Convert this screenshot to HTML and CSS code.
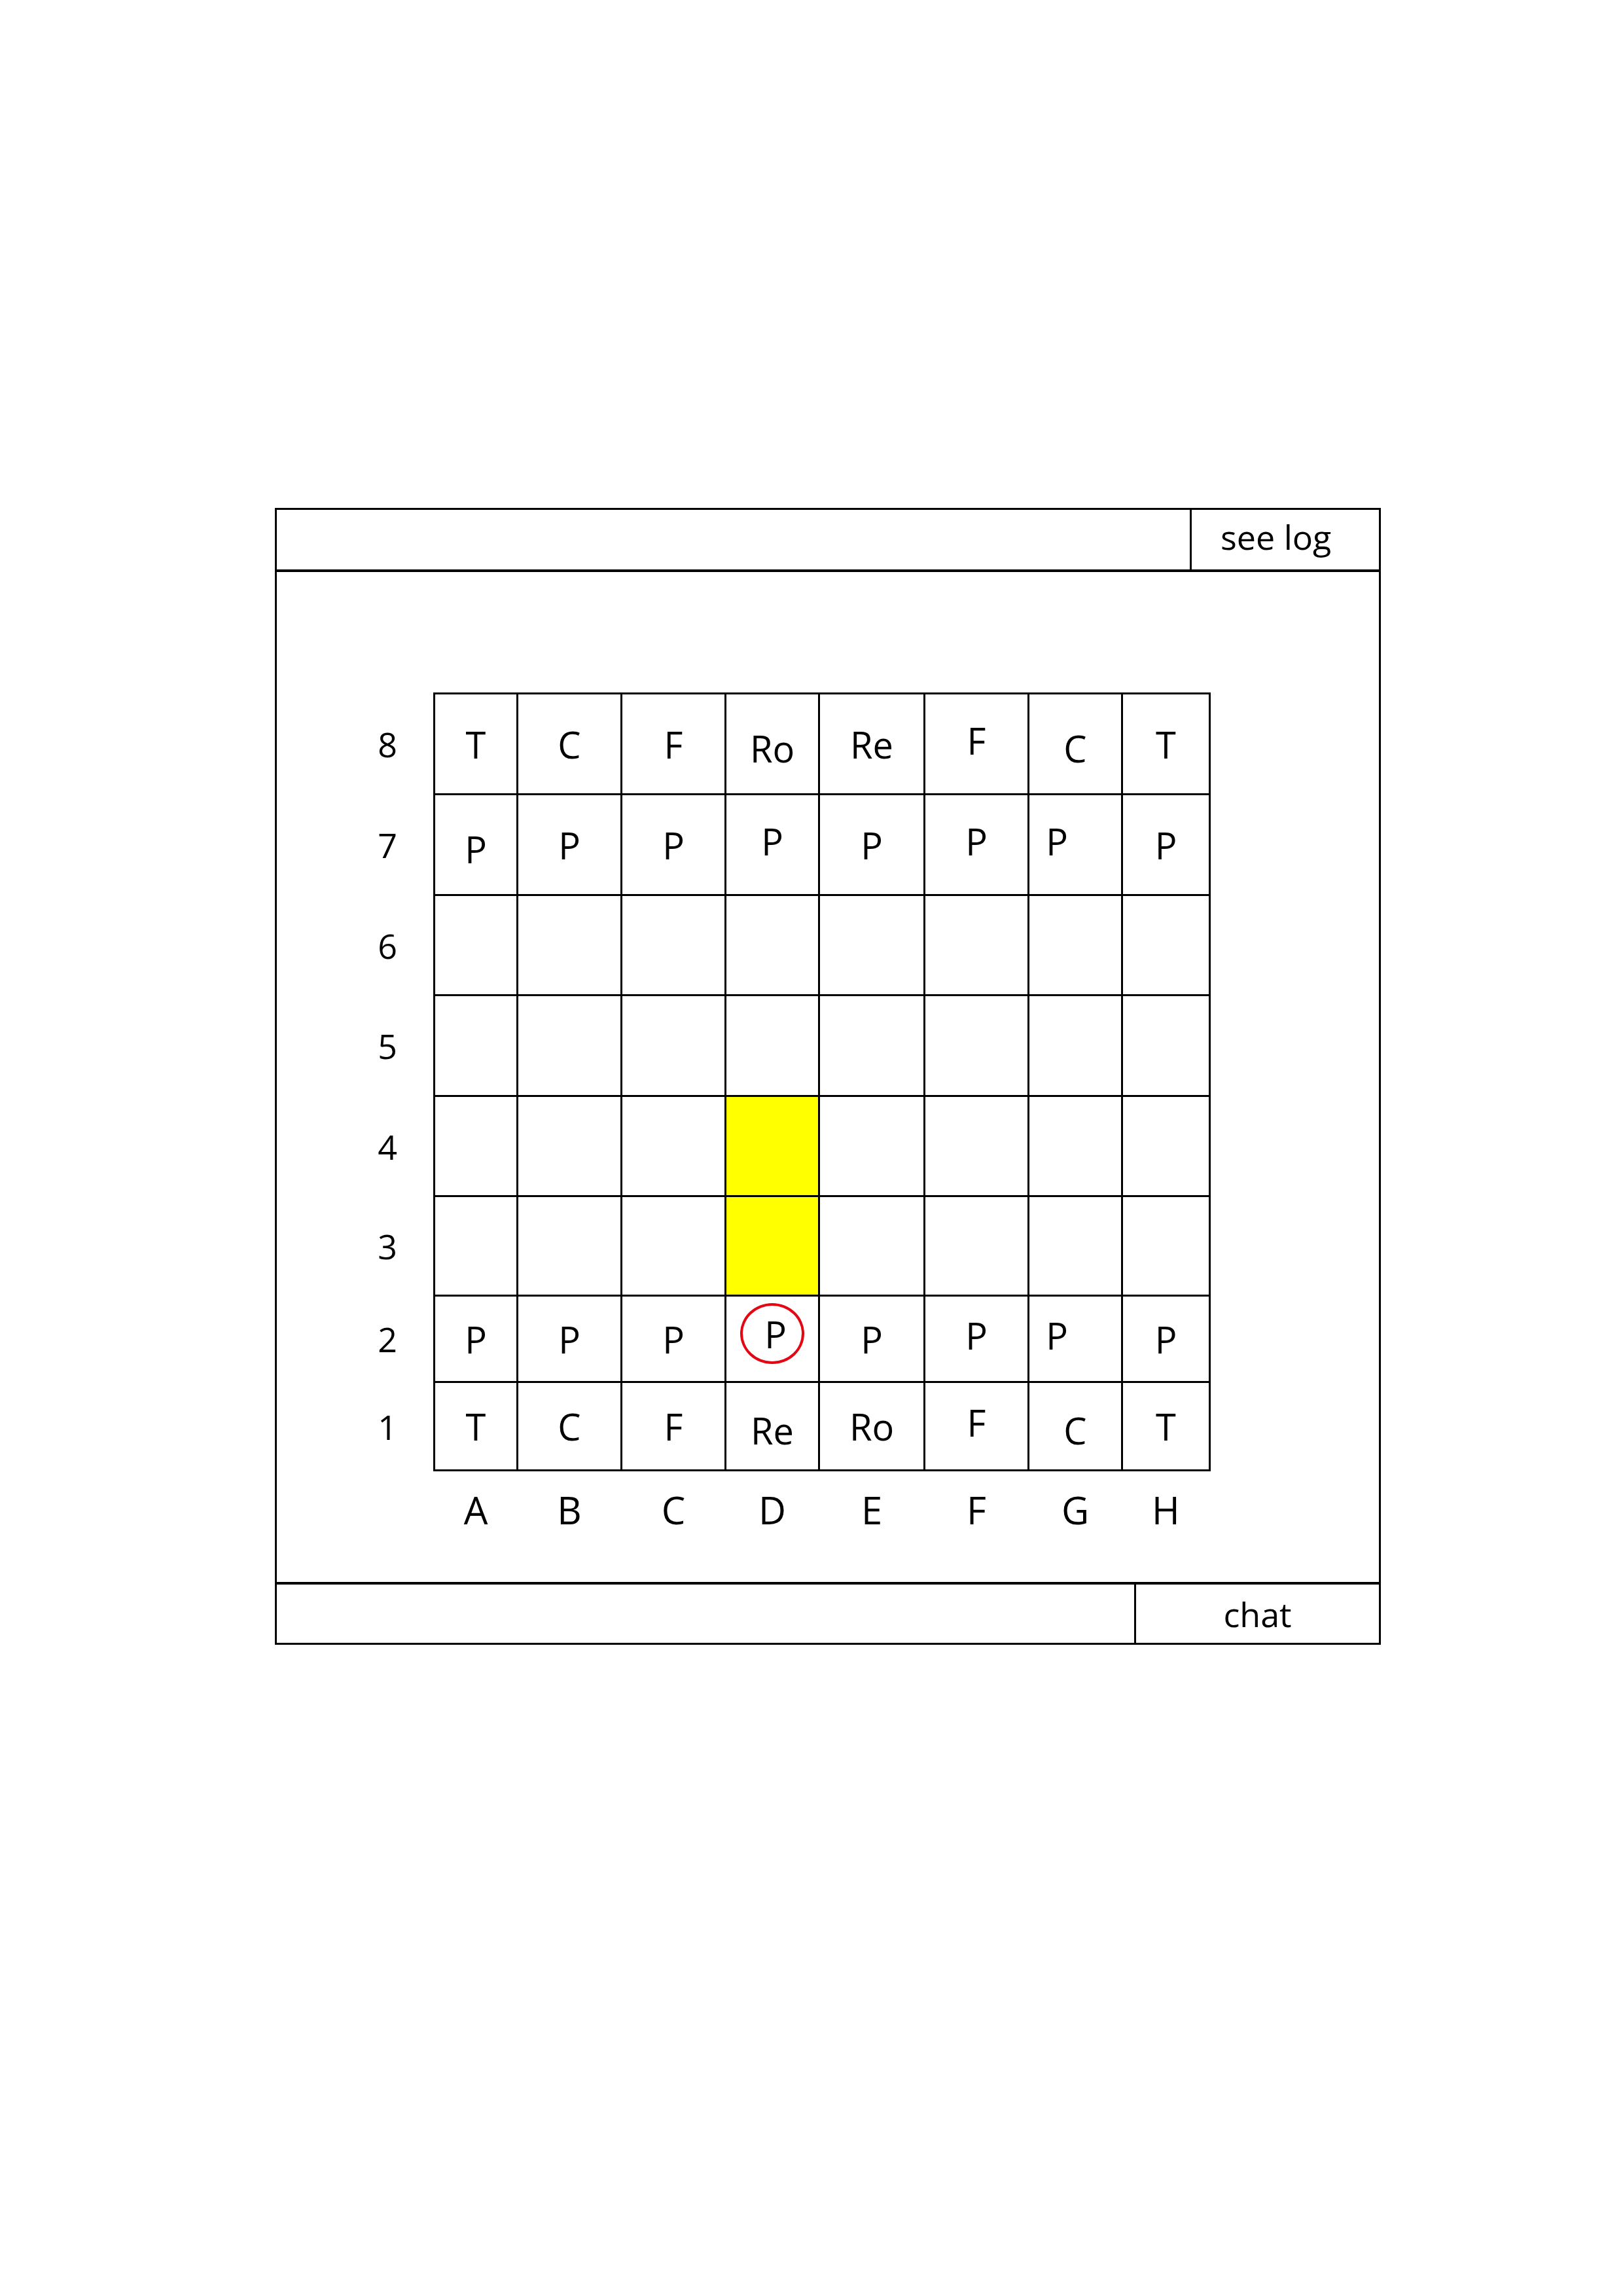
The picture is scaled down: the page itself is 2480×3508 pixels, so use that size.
FILE: index.html
```html
<!DOCTYPE html>
<html lang="en">
<head>
    <meta charset="UTF-8">
    <meta name="viewport" content="width=device-width, initial-scale=1.0">
    <title>Chess</title>
    <link rel="stylesheet" href="styles.css">
</head>
<body>
    <div class="frame">
        <div class="topbar">
            <div class="spacer"></div>
            <div class="log">see log</div>
        </div>

        <div class="main">
            <div class="play">
                <div class="ranks">
                    <span>8</span><span>7</span><span>6</span><span>5</span>
                    <span>4</span><span>3</span><span>2</span><span>1</span>
                </div>

                <div class="board">
                    <!-- 8 -->
                    <div class="cell">T</div>
                    <div class="cell">C</div>
                    <div class="cell">F</div>
                    <div class="cell low">Ro</div>
                    <div class="cell">Re</div>
                    <div class="cell high">F</div>
                    <div class="cell low">C</div>
                    <div class="cell">T</div>
                    <!-- 7 -->
                    <div class="cell low">P</div>
                    <div class="cell">P</div>
                    <div class="cell">P</div>
                    <div class="cell high">P</div>
                    <div class="cell">P</div>
                    <div class="cell high">P</div>
                    <div class="cell shift high">P</div>
                    <div class="cell">P</div>
                    <!-- 6 -->
                    <div class="cell"></div><div class="cell"></div><div class="cell"></div><div class="cell"></div>
                    <div class="cell"></div><div class="cell"></div><div class="cell"></div><div class="cell"></div>
                    <!-- 5 -->
                    <div class="cell"></div><div class="cell"></div><div class="cell"></div><div class="cell"></div>
                    <div class="cell"></div><div class="cell"></div><div class="cell"></div><div class="cell"></div>
                    <!-- 4 -->
                    <div class="cell"></div><div class="cell"></div><div class="cell"></div><div class="cell hl"></div>
                    <div class="cell"></div><div class="cell"></div><div class="cell"></div><div class="cell"></div>
                    <!-- 3 -->
                    <div class="cell"></div><div class="cell"></div><div class="cell"></div><div class="cell hl"></div>
                    <div class="cell"></div><div class="cell"></div><div class="cell"></div><div class="cell"></div>
                    <!-- 2 -->
                    <div class="cell">P</div>
                    <div class="cell">P</div>
                    <div class="cell">P</div>
                    <div class="cell"><span class="picked">P</span></div>
                    <div class="cell">P</div>
                    <div class="cell high">P</div>
                    <div class="cell shift high">P</div>
                    <div class="cell">P</div>
                    <!-- 1 -->
                    <div class="cell">T</div>
                    <div class="cell">C</div>
                    <div class="cell">F</div>
                    <div class="cell low">Re</div>
                    <div class="cell">Ro</div>
                    <div class="cell high">F</div>
                    <div class="cell low">C</div>
                    <div class="cell">T</div>
                </div>

                <div class="files">
                    <span>A</span><span>B</span><span>C</span><span>D</span>
                    <span>E</span><span>F</span><span>G</span><span>H</span>
                </div>
            </div>
        </div>

        <div class="bottombar">
            <div class="spacer"></div>
            <div class="chat">chat</div>
        </div>
    </div>
</body>
</html>
```

FILE: styles.css
```css
body {
    margin: 0;
    font-family: "Open Sans", "Noto Sans", sans-serif;
    color: #000;
    background: #fff;
}
.frame {
    box-sizing: border-box;
    width: 1690px;
    height: 1737px;
    margin: 776px 0 0 420px;
    border: 3px solid #000;
    display: flex;
    flex-direction: column;
}
.topbar {
    box-sizing: border-box;
    height: 95px;
    display: flex;
    border-bottom: 4px solid #000;
}
.bottombar {
    box-sizing: border-box;
    height: 93px;
    display: flex;
    border-top: 4px solid #000;
}
.spacer {
    flex: 1;
}
.log {
    box-sizing: border-box;
    width: 289px;
    border-left: 3px solid #000;
    display: flex;
    align-items: center;
    padding: 0 0 10px 44px;
    font-size: 52px;
}
.chat {
    box-sizing: border-box;
    width: 374px;
    border-left: 3px solid #000;
    display: flex;
    align-items: center;
    justify-content: center;
    font-size: 52px;
}
.main {
    flex: 1;
    padding: 184px 0 0 99px;
}
.play {
    --cols: 124px 156px 156px 140px 158px 156px 140px 131px;
    --rows: 151px 151px 150px 151px 150px 149px 129px 132px;
    display: grid;
    grid-template-columns: 140px auto;
    justify-content: start;
}
.ranks {
    display: grid;
    grid-template-rows: var(--rows);
    row-gap: 3px;
    padding: 3px 0;
    font-size: 52px;
}
.ranks span {
    display: flex;
    align-items: center;
    justify-content: center;
}
.board {
    display: grid;
    grid-template-columns: var(--cols);
    grid-template-rows: var(--rows);
    gap: 3px;
    padding: 3px;
    background: #000;
}
.cell {
    background: #fff;
    display: flex;
    align-items: center;
    justify-content: center;
    font-size: 56px;
}
.cell.hl {
    background: #ffff00;
}
.cell.shift {
    padding-right: 56px;
}
.cell.high {
    padding-bottom: 12px;
}
.cell.low {
    padding-top: 12px;
}
.picked {
    box-sizing: border-box;
    width: 98px;
    height: 93px;
    margin-bottom: 16px;
    border: 4px solid #e30613;
    border-radius: 50%;
    display: flex;
    align-items: center;
    justify-content: center;
    padding-left: 10px;
}
.files {
    grid-column: 2;
    display: grid;
    grid-template-columns: var(--cols);
    column-gap: 3px;
    padding: 0 3px;
    margin-top: 19px;
    font-size: 58px;
    text-align: center;
}
```
